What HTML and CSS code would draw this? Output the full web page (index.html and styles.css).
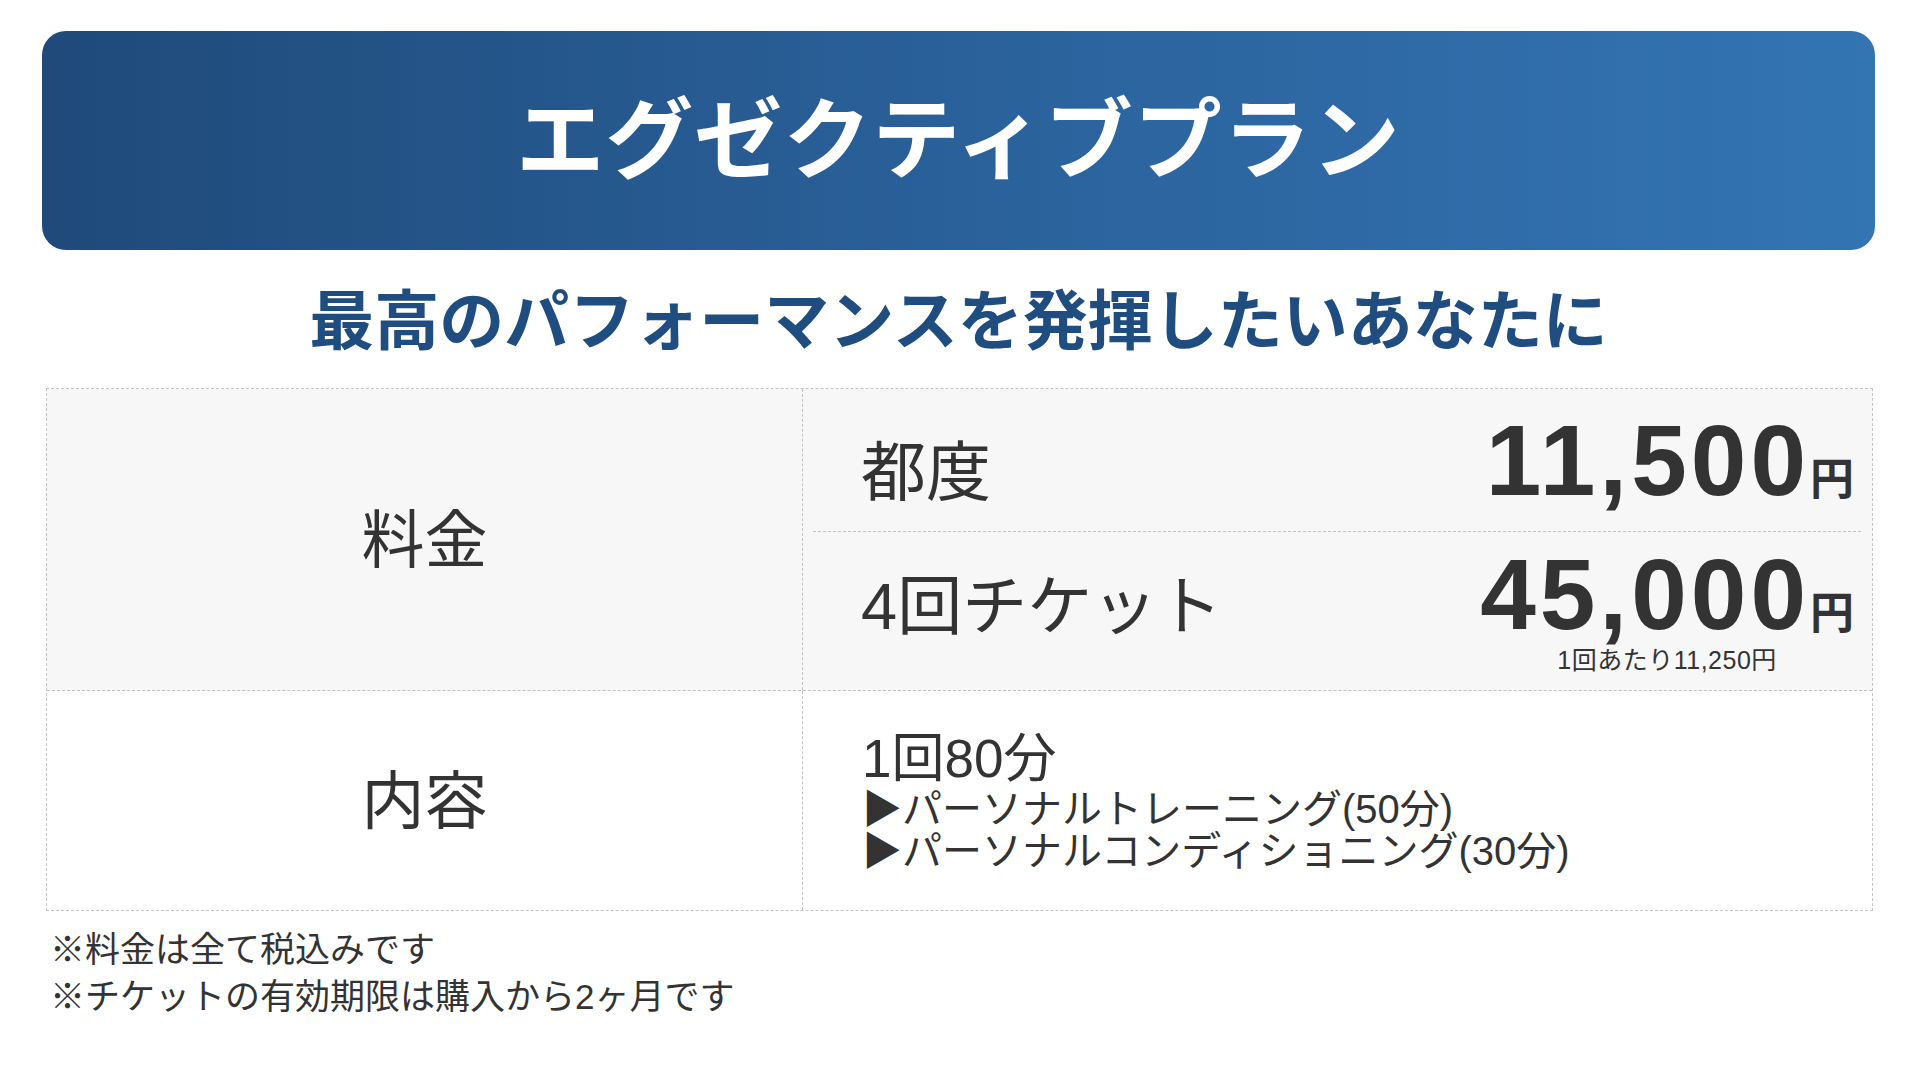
FILE: index.html
```html
<!DOCTYPE html>
<html lang="ja">
<head>
<meta charset="utf-8">
<title>エグゼクティブプラン</title>
<link rel="stylesheet" href="styles.css">
</head>
<body>
<div class="page">
  <header class="plan-header">
    <h1 class="plan-title">エグゼクティブプラン</h1>
  </header>
  <p class="plan-lead">最高のパフォーマンスを発揮したいあなたに</p>

  <div class="plan-table">
    <div class="row row-fee">
      <div class="head">料金</div>
      <div class="fee-body">
        <div class="fee-line fee-line-first">
          <span class="fee-label">都度</span>
          <span class="price-block">
            <span class="price"><span class="num">11,500</span><span class="yen">円</span></span>
          </span>
        </div>
        <div class="fee-line fee-line-second">
          <span class="fee-label">4回チケット</span>
          <span class="price-block">
            <span class="price"><span class="num">45,000</span><span class="yen">円</span></span>
            <span class="price-note">1回あたり11,250円</span>
          </span>
        </div>
      </div>
    </div>
    <div class="row row-content">
      <div class="head">内容</div>
      <div class="content-body">
        <div class="content-main">1回80分</div>
        <div class="content-item">▶パーソナルトレーニング(50分)</div>
        <div class="content-item">▶パーソナルコンディショニング(30分)</div>
      </div>
    </div>
  </div>

  <div class="notes">
    <p class="note">※料金は全て税込みです</p>
    <p class="note">※チケットの有効期限は購入から2ヶ月です</p>
  </div>
</div>
</body>
</html>
```

FILE: styles.css
```css
* {
  box-sizing: border-box;
}

html, body {
  margin: 0;
  padding: 0;
  background: #ffffff;
}

body {
  font-family: "Liberation Sans", "Noto Sans CJK JP", sans-serif;
  color: #333333;
}

.page {
  width: 1920px;
  height: 1080px;
  padding: 31px 45px 0 42px;
}

.plan-header {
  height: 219px;
  border-radius: 24px;
  background: linear-gradient(90deg, #1f4a7a 0%, #2b639d 55%, #3374b3 100%);
  display: flex;
  align-items: center;
  justify-content: center;
}

.plan-title {
  margin: 0;
  color: #ffffff;
  font-size: 88px;
  line-height: 88px;
  font-weight: 700;
  letter-spacing: 1px;
}

.plan-lead {
  margin: 40px 0 0;
  text-align: center;
  color: #1f4d7f;
  font-size: 65px;
  line-height: 64px;
  font-weight: 700;
}

.plan-table {
  margin: 34px 2px 0 4px;
  border: 1px dashed #c2c2c2;
}

.row {
  display: flex;
}

.row-fee {
  height: 302px;
  background: #f7f7f7;
  border-bottom: 1px dashed #c2c2c2;
}

.row-content {
  height: 219px;
  background: #ffffff;
}

.head {
  width: 756px;
  flex: none;
  border-right: 1px dashed #c2c2c2;
  display: flex;
  align-items: center;
  justify-content: center;
  font-size: 63px;
  line-height: 62px;
}

.fee-body {
  flex: 1;
  display: flex;
  flex-direction: column;
  padding: 0 11px 0 10px;
}

.fee-line {
  display: flex;
  justify-content: space-between;
  align-items: baseline;
  padding: 0 7px 0 48px;
}

.fee-line-first {
  height: 143px;
  padding-top: 21px;
  border-bottom: 1px dashed #c2c2c2;
}

.fee-line-second {
  height: 158px;
  padding-top: 12px;
}

.fee-label {
  font-size: 65px;
  line-height: 64px;
}

.price-block {
  display: inline-flex;
  flex-direction: column;
  align-items: center;
}

.price {
  font-size: 100px;
  line-height: 100px;
  font-weight: 700;
  white-space: nowrap;
}

.num {
  letter-spacing: 4px;
}

.yen {
  font-size: 44px;
  line-height: 44px;
  font-weight: 700;
}

.price-note {
  margin-top: 4px;
  font-size: 25px;
  line-height: 24px;
  letter-spacing: 0.5px;
  white-space: nowrap;
}

.content-body {
  flex: 1;
  display: flex;
  flex-direction: column;
  justify-content: center;
  padding-left: 59px;
}

.content-main {
  font-size: 53px;
  line-height: 58px;
}

.content-item {
  font-size: 40px;
  line-height: 42px;
}

.notes {
  margin: 15px 0 0 8px;
}

.note {
  margin: 0;
  font-size: 35px;
  line-height: 47px;
}
```
